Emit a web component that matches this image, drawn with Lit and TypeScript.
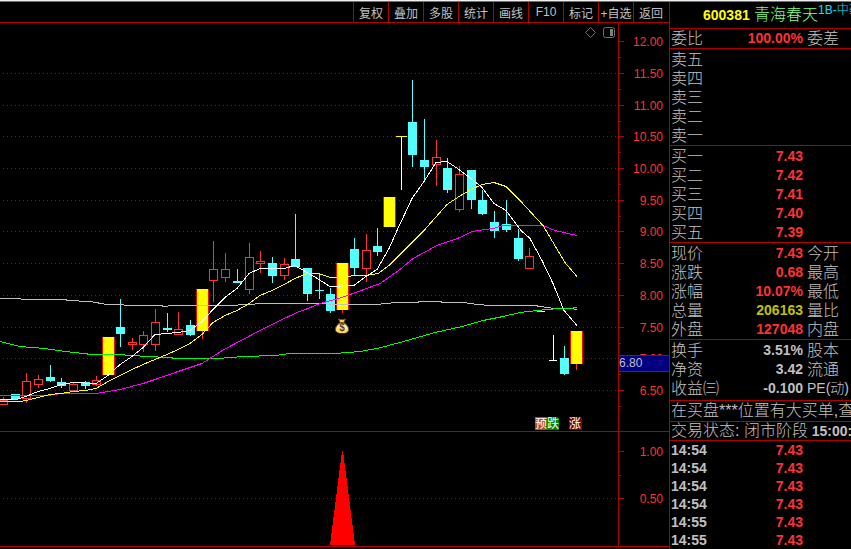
import { LitElement, html, svg, css } from "lit";
import { customElement } from "lit/decorators.js";
import { classMap } from "lit/directives/class-map.js";

type Kind = "up" | "down" | "limit";
// centre x, high, body top, body bottom, low, kind
type Candle = [number, number, number, number, number, Kind];

const CANDLES: Candle[] = [
  [3, 397, 400, 404, 404, "up"],
  [15, 394, 394, 398, 399, "down"],
  [26, 373, 381, 398, 402, "up"],
  [38, 375, 379, 384, 387, "up"],
  [50, 365, 377, 380, 381, "down"],
  [61, 378, 382, 385, 387, "down"],
  [73, 382, 384, 390, 390, "up"],
  [85, 381, 382, 385, 388, "down"],
  [96, 376, 380, 384, 385, "up"],
  [108, 337, 337, 374, 374, "limit"],
  [120, 299, 327, 333, 346, "down"],
  [132, 338, 342, 344, 349, "up"],
  [143, 331, 335, 344, 351, "up"],
  [155, 309, 322, 344, 350, "up"],
  [167, 313, 328, 329, 331, "down"],
  [178, 312, 329, 334, 334, "up"],
  [190, 320, 325, 334, 335, "down"],
  [202, 289, 289, 330, 338, "limit"],
  [213, 241, 269, 280, 301, "up"],
  [225, 253, 269, 277, 281, "up"],
  [237, 269, 281, 282, 282, "down"],
  [249, 243, 257, 289, 293, "up"],
  [260, 251, 261, 263, 272, "up"],
  [272, 257, 263, 275, 282, "down"],
  [284, 258, 264, 275, 279, "up"],
  [295, 214, 259, 266, 266, "down"],
  [307, 268, 268, 293, 300, "down"],
  [319, 273, 290, 290, 298, "down"],
  [330, 288, 294, 310, 312, "down"],
  [342, 263, 263, 309, 312, "limit"],
  [354, 238, 249, 267, 274, "down"],
  [366, 234, 250, 268, 281, "up"],
  [377, 228, 246, 251, 255, "down"],
  [389, 197, 197, 226, 226, "limit"],
  [412, 80, 122, 154, 166, "down"],
  [424, 119, 160, 166, 181, "down"],
  [436, 140, 157, 164, 185, "up"],
  [447, 158, 168, 189, 192, "down"],
  [459, 166, 174, 209, 211, "up"],
  [471, 170, 170, 199, 208, "down"],
  [482, 190, 200, 213, 214, "down"],
  [494, 211, 222, 230, 237, "down"],
  [506, 200, 224, 229, 231, "down"],
  [518, 229, 238, 258, 260, "down"],
  [529, 248, 256, 268, 268, "up"],
  [564, 346, 358, 373, 374, "down"],
  [576, 331, 331, 363, 369, "limit"],
];

const AVERAGES = [
  {
    name: "ma-long",
    points:
      "0,298 20,298 22,299 65,299 68,300 90,301 107,304 120,304 128,305 160,305 165,306 172,305 230,305 264,303 320,303 335,304 380,304 382,303 400,302 417,302 420,301 440,301 443,302 463,302 478,304 490,305 535,305 540,306 555,308 570,308 577,309",
  },
  {
    name: "ma-sixty",
    points:
      "0,341 20,346 45,348 65,351 92,354 115,354 135,355 145,356 170,357 175,358 218,358 243,356 275,355 290,353 335,353 360,351 377,348 400,342 435,332 462,326 483,320 503,316 520,312 537,310 558,308 570,308 577,307",
  },
  {
    name: "ma-twenty",
    points:
      "0,395 48,395 61,393 96,393 108,391 120,389 143,383 155,379 178,371 190,367 202,363 213,356 224,349 260,330 280,320 297,312 308,308 320,303 342,297 353,293 380,283 400,269 413,258 437,245 460,237 472,231 493,228 503,225 543,225 555,230 577,235",
  },
  {
    name: "ma-ten",
    points:
      "0,401 20,401 26,400 38,397 50,394 61,393 73,391 85,390 96,388 108,381 120,375 132,369 143,364 155,359 167,354 178,349 190,343 202,334 213,322 225,315 237,310 249,303 260,295 272,290 284,284 295,278 307,273 319,273 330,277 342,277 354,275 366,275 378,273 389,265 400,254 424,230 447,204 459,196 471,189 482,184 494,182 506,186 520,200 543,225 565,262 577,276",
  },
  {
    name: "ma-five",
    points:
      "0,399 16,399 26,396 38,391 50,388 61,384 73,382 96,383 108,375 120,364 132,356 143,347 155,334 178,332 190,330 202,321 213,309 225,297 237,288 249,273 260,268 284,268 295,265 307,272 319,279 330,286 354,285 366,276 377,269 389,248 397,230 412,198 424,181 436,162 447,161 459,169 471,178 482,187 494,203 506,210 521,230 530,238 542,260 553,283 564,310 577,325",
  },
];

const SCALE: [string, number][] = [
  ["12.00", 41],
  ["11.50", 73],
  ["11.00", 105],
  ["10.50", 136],
  ["10.00", 168],
  ["9.50", 200],
  ["9.00", 231],
  ["8.50", 263],
  ["8.00", 295],
  ["7.50", 327],
  ["7.00", 358],
  ["6.50", 390],
];

const candle = ([x, high, top, bottom, low, kind]: Candle) => {
  const half = kind === "limit" ? 6 : 4;
  const height = bottom - top + 1;
  return svg`
    <g class=${kind}>
      <rect class="wick" x=${x} y=${high} width="1" height=${top - high}></rect>
      <rect class="wick" x=${x} y=${bottom + 1} width="1" height=${Math.max(0, low - bottom)}></rect>
      ${
        kind === "up"
          ? svg`<rect class="body" x=${x - half + 0.5} y=${top + 0.5} width=${half * 2} height=${height - 1}></rect>`
          : svg`<rect class="body" x=${x - half} y=${top} width=${half * 2 + 1} height=${height}></rect>`
      }
      ${
        kind === "limit"
          ? svg`<path class="edge" d="M${x - half + 0.5} ${top}v${height}M${x + half + 0.5} ${top}v${height}"></path>`
          : null
      }
    </g>`;
};

@customElement("price-chart")
export class PriceChart extends LitElement {
  static styles = css`
    :host {
      display: block;
      font-family: "Liberation Sans", "Noto Sans CJK SC", sans-serif;
      font-size: 12px;
    }
    svg {
      display: block;
      width: 100%;
      height: auto;
      shape-rendering: crispEdges;
    }
    .price {
      border-bottom: 1px solid #b00000;
    }
    .grid {
      stroke: #b00000;
      stroke-dasharray: 1 3;
    }
    .axis {
      stroke: #b00000;
      fill: none;
    }
    .label {
      fill: #ff3232;
      text-anchor: end;
    }
    .up .body {
      fill: #000;
      stroke: #ff3232;
    }
    .up .wick,
    .limit .wick {
      fill: #ff3232;
    }
    .down rect {
      fill: #54ffff;
    }
    .limit .body {
      fill: #ff0;
    }
    .edge {
      stroke: #f00;
    }
    .line {
      fill: none;
    }
    .ma-five {
      stroke: #fff;
    }
    .ma-ten {
      stroke: #ff0;
    }
    .ma-twenty {
      stroke: #f0f;
    }
    .ma-sixty {
      stroke: #0f0;
    }
    .ma-long {
      stroke: #c0c0c0;
    }
    .white {
      fill: #fff;
    }
    .yellow {
      fill: #ff0;
    }
    .tool {
      fill: none;
      stroke: #707070;
      shape-rendering: auto;
    }
    .tool-fill {
      fill: #808080;
    }
    .cursor {
      fill: #000080;
      stroke: #b00000;
    }
    .cursor-text {
      fill: #c0c0c0;
    }
    .tag-text {
      fill: #fff;
    }
    .tag-warn {
      fill: #b84a10;
    }
    .tag-fall {
      fill: #008000;
    }
    .tag-rise {
      fill: #800000;
    }
    .bag {
      shape-rendering: auto;
    }
    .bag-body {
      fill: #fff0a0;
      stroke: #7a5020;
    }
    .bag-neck {
      fill: #ffe030;
      stroke: #7a5020;
    }
    .bag-shade {
      fill: none;
      stroke: #ffe030;
      stroke-width: 2;
    }
    .bag-sign {
      fill: #6b3030;
      font-size: 10px;
      font-weight: bold;
      text-anchor: middle;
    }
    .spike {
      fill: #f00;
    }
  `;

  render() {
    return html`
      <svg class="price" viewBox="0 23 669 408" role="img" aria-label="青海春天 K线图">
        ${SCALE.slice(1).map(([, y]) => svg`<path class="grid" d="M3 ${y + 0.5}H618"></path>`)}
        ${CANDLES.map(candle)}
        <rect class="white" x="401" y="137" width="1" height="53"></rect>
        <rect class="yellow" x="396" y="136" width="11" height="1"></rect>
        <rect class="white" x="537" y="311" width="8" height="1"></rect>
        <rect class="white" x="553" y="335" width="1" height="25"></rect>
        <rect class="white" x="549" y="360" width="8" height="1"></rect>
        ${AVERAGES.map(
          (a) =>
            svg`<polyline class="line ${a.name}" points=${a.points} transform="translate(0 0.5)"></polyline>`
        )}
        <g class="bag">
          <path class="bag-neck" d="M338.500 319q4 1.500 7 0l-2 4h-3z"></path>
          <path
            class="bag-body"
            d="M340.500 322.500h3q3 1.500 4.500 4.500q2 5-3 6h-6q-5-1-3-6q1.500-3 4.500-4.500z"
          ></path>
          <path class="bag-shade" d="M337.500 328q0 4 4 4h2q3 0 3.500-3"></path>
          <text class="bag-sign" x="342" y="331">$</text>
        </g>
        <path class="tool" d="M590.500 27.500l5 5l-5 5l-5-5z"></path>
        <rect class="tool" x="603.500" y="27.500" width="11" height="10" rx="2"></rect>
        <rect class="tool-fill" x="610" y="29" width="3" height="7"></rect>
        <path class="axis" d="M618.500 23V431"></path>
        ${SCALE.map(
          ([text, y]) => svg`
            <path class="axis" d="M619 ${y + 0.5}h5M619 ${y + 16.5}h2"></path>
            <text class="label" x="663" y=${y + 5}>${text}</text>`
        )}
        <rect class="cursor" x="618.500" y="355.500" width="51" height="16"></rect>
        <text class="cursor-text" x="619" y="367">6.80</text>
        <path class="tag-warn" d="M535 417h11v13h-11z"></path>
        <path class="tag-fall" d="M546 417h11l2 2v11h-13z"></path>
        <path class="tag-rise" d="M569 417h11l2 2v11h-13z"></path>
        <text class="tag-text" x="535" y="428">预</text>
        <text class="tag-text" x="547" y="428">跌</text>
        <text class="tag-text" x="569" y="428">涨</text>
      </svg>
      <svg viewBox="0 432 669 115" role="img" aria-label="指标图">
        <path class="grid" d="M3 498.500H618"></path>
        <path class="spike" d="M342 451h1l12 94h-25z"></path>
        <path class="axis" d="M618.500 432V546M0 546.500H669"></path>
        <path class="axis" d="M619 451.500h5M619 475.500h2M619 498.500h5"></path>
        <text class="label" x="663" y="456">1.00</text>
        <text class="label" x="663" y="503">0.50</text>
      </svg>
    `;
  }
}

type Row = [label: string, value: string, tone: string, next: string];

const ASKS: Row[] = ["五", "四", "三", "二", "一"].map((n) => ["卖" + n, "", "", ""]);
const BIDS: Row[] = [
  ["买一", "7.43", "red", ""],
  ["买二", "7.42", "red", ""],
  ["买三", "7.41", "red", ""],
  ["买四", "7.40", "red", ""],
  ["买五", "7.39", "red", ""],
];
const PRICES: Row[] = [
  ["现价", "7.43", "red", "今开"],
  ["涨跌", "0.68", "red", "最高"],
  ["涨幅", "10.07%", "red", "最低"],
  ["总量", "206163", "olive", "量比"],
  ["外盘", "127048", "red", "内盘"],
];
const FACTS: Row[] = [
  ["换手", "3.51%", "plain", "股本"],
  ["净资", "3.42", "plain", "流通"],
  ["收益㈢", "-0.100", "plain", "PE(动)"],
];
const TICKS = ["14:54", "14:54", "14:54", "14:54", "14:55", "14:55"];

@customElement("quote-panel")
export class QuotePanel extends LitElement {
  static styles = css`
    :host {
      display: block;
      overflow: hidden;
      border-left: 1px solid #b00000;
      color: #c0c0c0;
      font-family: "Liberation Sans", "Noto Sans CJK SC", sans-serif;
      font-size: 16px;
      font-weight: 300;
      white-space: nowrap;
    }
    .title {
      display: flex;
      height: 26px;
      margin: 0;
      padding-left: 33px;
      border-bottom: 1px solid #b00000;
      font-size: 16px;
      font-weight: 300;
      line-height: 26px;
    }
    .title span {
      flex: none;
    }
    .code {
      width: 51px;
      color: #ff0;
      font-size: 14px;
      font-weight: bold;
    }
    .name {
      color: #80ff80;
    }
    .board {
      color: #00e0ff;
      font-size: 12px;
      line-height: 16px;
    }
    table {
      width: 100%;
      border-spacing: 0;
      table-layout: fixed;
      padding: 1px 0 0 1px;
      border-bottom: 1px solid #b00000;
    }
    .roomy {
      padding-bottom: 2px;
    }
    .ticks {
      padding-top: 0;
      border-bottom: 0;
    }
    .tight {
      padding-top: 0;
    }
    th,
    td {
      height: 19px;
      padding: 0;
      font-weight: inherit;
      line-height: 19px;
      text-align: left;
    }
    .ticks td {
      height: 18px;
      line-height: 18px;
    }
    .label {
      width: 56px;
    }
    .value {
      width: 76px;
      font-size: 14px;
      font-weight: bold;
      text-align: right;
    }
    .next {
      padding-left: 4px;
    }
    .next.mixed {
      font-size: 14px;
    }
    .time {
      width: 56px;
      font-size: 14px;
      font-weight: bold;
    }
    .red {
      color: #ff3232;
    }
    .olive {
      color: #c0c000;
    }
    .message {
      margin: 0;
      padding-left: 1px;
      height: 20px;
      border-bottom: 1px solid #b00000;
      line-height: 20px;
    }
    .status {
      height: 18px;
      line-height: 18px;
    }
    .clock {
      font-size: 14px;
      font-weight: bold;
    }
  `;

  private rows(rows: Row[], variant = "") {
    return html`
      <table class=${variant}>
        ${rows.map(
          ([label, value, tone, next]) => html`
            <tr>
              <th class="label" scope="row">${label}</th>
              <td class="value ${classMap({ [tone || "plain"]: true })}">${value}</td>
              <td class="next ${classMap({ mixed: next.startsWith("PE") })}">${next}</td>
            </tr>
          `
        )}
      </table>
    `;
  }

  render() {
    return html`
      <h1 class="title">
        <span class="code">600381</span><span class="name">青海春天</span
        ><span class="board">1B-中药</span>
      </h1>
      ${this.rows([["委比", "100.00%", "red", "委差"]], "tight")} ${this.rows(ASKS)}
      ${this.rows(BIDS)} ${this.rows(PRICES)} ${this.rows(FACTS, "roomy")}
      <p class="message">在买盘***位置有大买单,查</p>
      <p class="message status">交易状态: 闭市阶段<span class="clock"> 15:00:</span></p>
      <table class="ticks">
        ${TICKS.map(
          (t) => html`<tr>
            <td class="time">${t}</td>
            <td class="value red">7.43</td>
            <td></td>
          </tr>`
        )}
      </table>
    `;
  }
}

const ACTIONS = ["复权", "叠加", "多股", "统计", "画线", "F10", "标记", "+自选", "返回"];

@customElement("app-root")
export class AppRoot extends LitElement {
  static styles = css`
    :host {
      display: grid;
      grid-template-columns: minmax(0, 1fr) 182px;
      grid-template-rows: 2px auto;
      min-height: 100vh;
      background: #000;
      color: #c0c0c0;
      font-family: "Liberation Sans", "Noto Sans CJK SC", sans-serif;
    }
    .frame {
      grid-column: 1 / -1;
      box-sizing: border-box;
      border-top: 1px solid #f0f0f0;
      background: #707070;
    }
    .toolbar {
      display: flex;
      justify-content: flex-end;
      height: 20px;
      padding-right: 1px;
      border-bottom: 1px solid #b00000;
    }
    button {
      box-sizing: border-box;
      width: 35px;
      padding: 0;
      border: 0;
      border-left: 1px solid #b00000;
      background: none;
      color: inherit;
      font: 12px "Liberation Sans", "Noto Sans CJK SC", sans-serif;
      white-space: nowrap;
    }
  `;

  render() {
    return html`
      <div class="frame"></div>
      <main>
        <nav class="toolbar">${ACTIONS.map((a) => html`<button type="button">${a}</button>`)}</nav>
        <price-chart></price-chart>
      </main>
      <quote-panel></quote-panel>
    `;
  }
}
